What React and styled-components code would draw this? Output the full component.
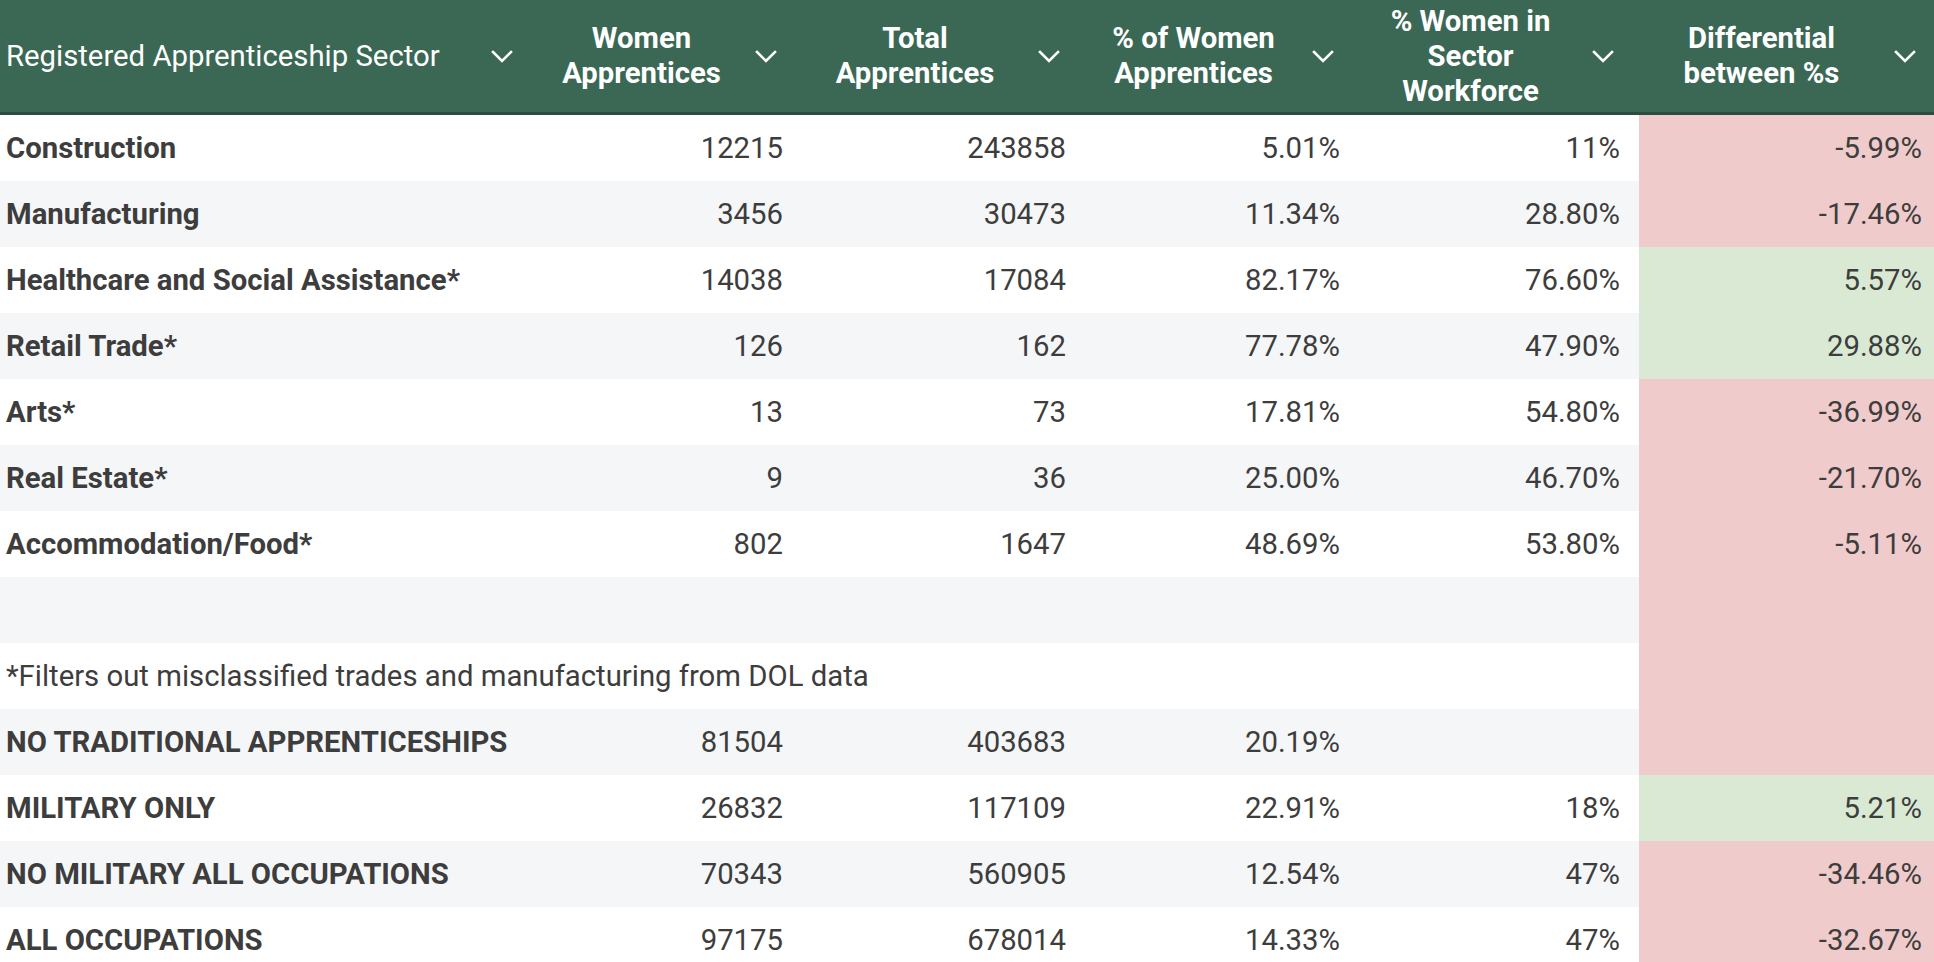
import React from "react";
import styled, { createGlobalStyle } from "styled-components";

const GlobalStyle = createGlobalStyle`
  html, body {
    margin: 0;
    padding: 0;
    overflow: hidden;
    background: #ffffff;
  }
  body {
    font-family: Roboto, "Liberation Sans", Arial, sans-serif;
  }
`;

const COLS = "538px 264px 283px 274px 280px 302px";

const Table = styled.div`
  width: 1941px;
  display: flex;
  flex-direction: column;
`;

const HeaderRow = styled.div`
  display: grid;
  grid-template-columns: ${COLS};
  height: 112px;
  background: #3b6755;
  border-bottom: 3px solid #2d4d40;
`;

const HeaderCell = styled.div`
  display: flex;
  align-items: center;
  padding: 0 25px 0 ${(p) => (p.$first ? "6px" : "12px")};
  color: #ffffff;
`;

const HeaderLabel = styled.div`
  flex: 1;
  font-size: 29.3px;
  line-height: 35px;
  font-weight: ${(p) => (p.$first ? 400 : 700)};
  text-align: ${(p) => (p.$first ? "left" : "center")};
  white-space: ${(p) => (p.$first ? "nowrap" : "normal")};
  margin-right: 22px;
`;

const Chevron = styled.svg`
  width: 22px;
  height: 13px;
  flex: none;
`;

const Row = styled.div`
  display: grid;
  grid-template-columns: ${COLS};
  height: 66px;
  background: ${(p) => (p.$alt ? "#f5f6f8" : "#ffffff")};
`;

const TONES = {
  red: "#f0cbcb",
  green: "#d9e9d4",
};

const Cell = styled.div`
  display: flex;
  align-items: center;
  justify-content: ${(p) => (p.$left ? "flex-start" : "flex-end")};
  padding: 0 19px 0 6px;
  font-size: 29.3px;
  font-weight: ${(p) => (p.$bold ? 700 : 400)};
  color: #3d3d3d;
  white-space: nowrap;
  overflow: visible;
  background: ${(p) => (p.$tone ? TONES[p.$tone] : "transparent")};
  position: relative;
  z-index: ${(p) => (p.$left ? 1 : 0)};
`;

const headers = [
  "Registered Apprenticeship Sector",
  "Women Apprentices",
  "Total Apprentices",
  "% of Women Apprentices",
  "% Women in Sector Workforce",
  "Differential between %s",
];

const rows = [
  { name: "Construction", v: ["12215", "243858", "5.01%", "11%", "-5.99%"], tone: "red" },
  { name: "Manufacturing", v: ["3456", "30473", "11.34%", "28.80%", "-17.46%"], tone: "red" },
  { name: "Healthcare and Social Assistance*", v: ["14038", "17084", "82.17%", "76.60%", "5.57%"], tone: "green" },
  { name: "Retail Trade*", v: ["126", "162", "77.78%", "47.90%", "29.88%"], tone: "green" },
  { name: "Arts*", v: ["13", "73", "17.81%", "54.80%", "-36.99%"], tone: "red" },
  { name: "Real Estate*", v: ["9", "36", "25.00%", "46.70%", "-21.70%"], tone: "red" },
  { name: "Accommodation/Food*", v: ["802", "1647", "48.69%", "53.80%", "-5.11%"], tone: "red" },
  { name: "", v: ["", "", "", "", ""], tone: "red" },
  { name: "*Filters out misclassified trades and manufacturing from DOL data", note: true, v: ["", "", "", "", ""], tone: "red" },
  { name: "NO TRADITIONAL APPRENTICESHIPS", v: ["81504", "403683", "20.19%", "", ""], tone: "red" },
  { name: "MILITARY ONLY", v: ["26832", "117109", "22.91%", "18%", "5.21%"], tone: "green" },
  { name: "NO MILITARY ALL OCCUPATIONS", v: ["70343", "560905", "12.54%", "47%", "-34.46%"], tone: "red" },
  { name: "ALL OCCUPATIONS", v: ["97175", "678014", "14.33%", "47%", "-32.67%"], tone: "red" },
];

function ChevronIcon() {
  return (
    <Chevron viewBox="0 0 22 13" fill="none">
      <polyline
        points="2,2 11,11 20,2"
        stroke="#ffffff"
        strokeWidth="2.6"
        strokeLinecap="square"
        strokeLinejoin="miter"
      />
    </Chevron>
  );
}

export default function App() {
  return (
    <>
      <GlobalStyle />
      <Table>
        <HeaderRow>
          {headers.map((h, i) => (
            <HeaderCell key={h} $first={i === 0}>
              <HeaderLabel $first={i === 0}>{h}</HeaderLabel>
              <ChevronIcon />
            </HeaderCell>
          ))}
        </HeaderRow>
        {rows.map((r, i) => (
          <Row key={i} $alt={i % 2 === 1}>
            <Cell $left $bold={!r.note}>{r.name}</Cell>
            {r.v.map((val, j) => (
              <Cell key={j} $tone={j === 4 ? r.tone : undefined}>
                {val}
              </Cell>
            ))}
          </Row>
        ))}
      </Table>
    </>
  );
}
